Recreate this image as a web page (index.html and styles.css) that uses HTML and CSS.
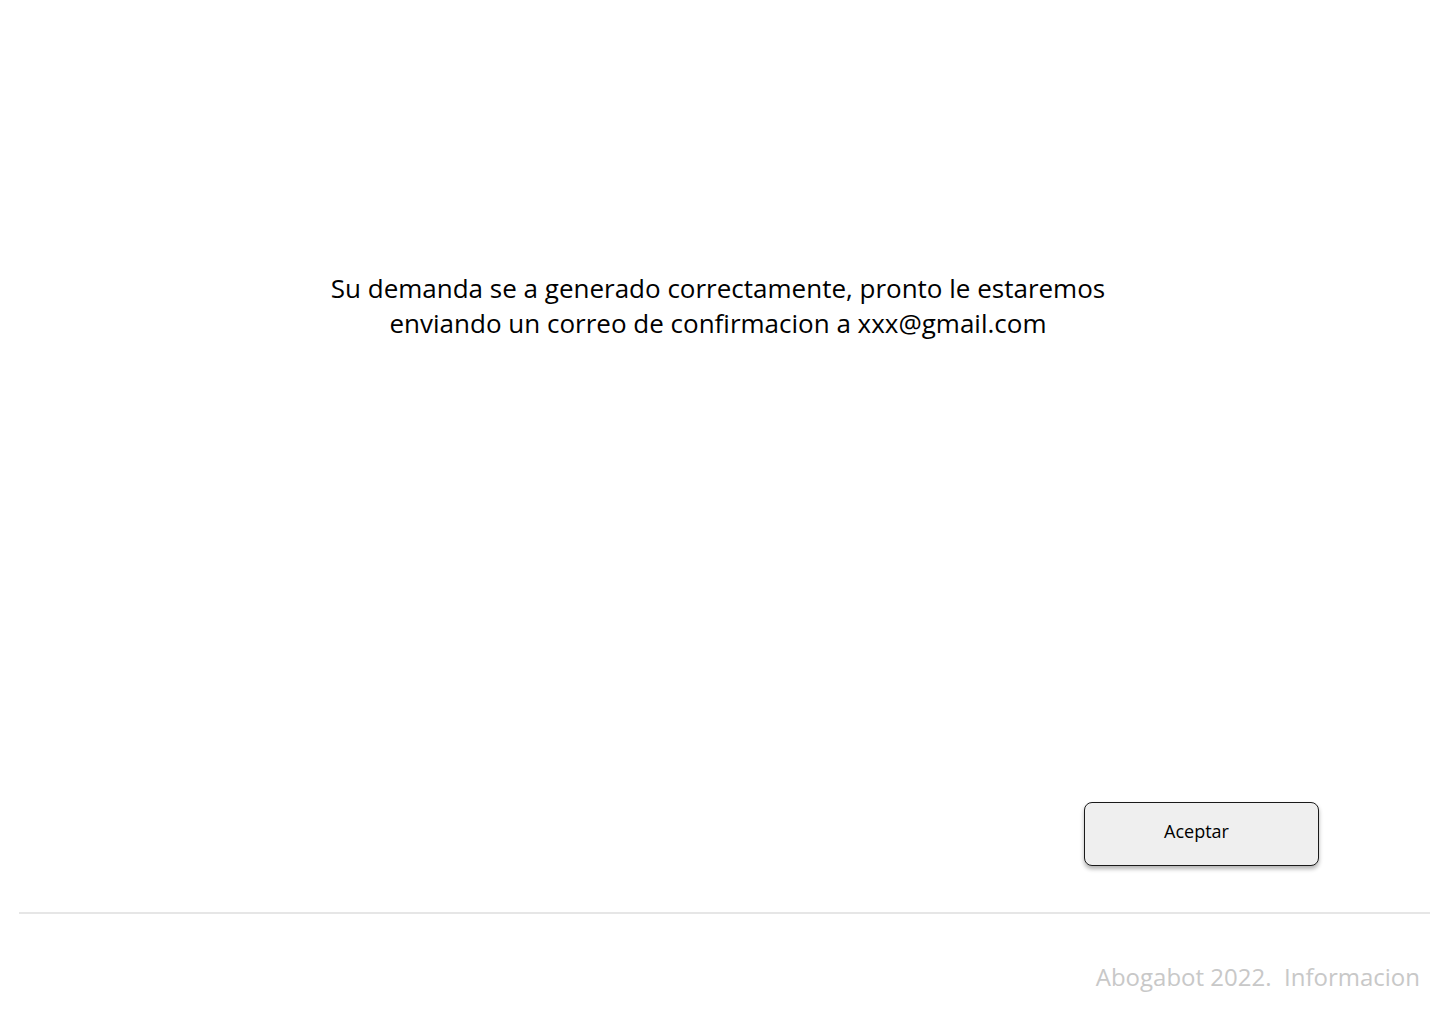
FILE: index.html
```html
<!DOCTYPE html>
<html lang="es">
<head>
<meta charset="utf-8">
<title>Abogabot</title>
<link rel="stylesheet" href="styles.css">
</head>
<body>
<div class="page">
  <main class="main">
    <p class="message">Su demanda se a generado correctamente, pronto le estaremos enviando un correo de confirmacion a xxx@gmail.com</p>
    <div class="actions">
      <button class="btn" type="button">Aceptar</button>
    </div>
  </main>
  <div class="divider"></div>
  <footer class="footer">Abogabot 2022.&nbsp; Informacion</footer>
</div>
</body>
</html>
```
FILE: styles.css
```css
* { box-sizing: border-box; }
html, body {
  margin: 0;
  padding: 0;
  background: #ffffff;
}
body {
  font-family: "Open Sans", "Noto Sans", sans-serif;
  color: #000;
}
.page {
  width: 1440px;
  height: 1024px;
  display: flex;
  flex-direction: column;
}
.main {
  height: 912px;
  display: flex;
  flex-direction: column;
  padding-top: 271px;
}
.message {
  margin: 0 auto;
  width: 820px;
  text-align: center;
  font-size: 26px;
  line-height: 35px;
  padding-right: 4px;
}
.actions {
  margin-top: auto;
  display: flex;
  justify-content: flex-end;
  padding-right: 121px;
  margin-bottom: 46px;
}
.btn {
  width: 235px;
  height: 64px;
  border: 1px solid #1a1a1a;
  border-radius: 8px;
  background: #efefef;
  box-shadow: 0 3px 4px rgba(0, 0, 0, 0.3);
  font-family: "Open Sans", "Noto Sans", sans-serif;
  font-size: 18px;
  color: #000;
  padding: 0 10px 6px 0;
}
.divider {
  height: 2px;
  background: #e6e6e6;
  margin: 0 10px 0 19px;
}
.footer {
  padding-top: 46px;
  padding-right: 20px;
  text-align: right;
  font-size: 24px;
  line-height: 33px;
  color: #c8c8c8;
}
```
